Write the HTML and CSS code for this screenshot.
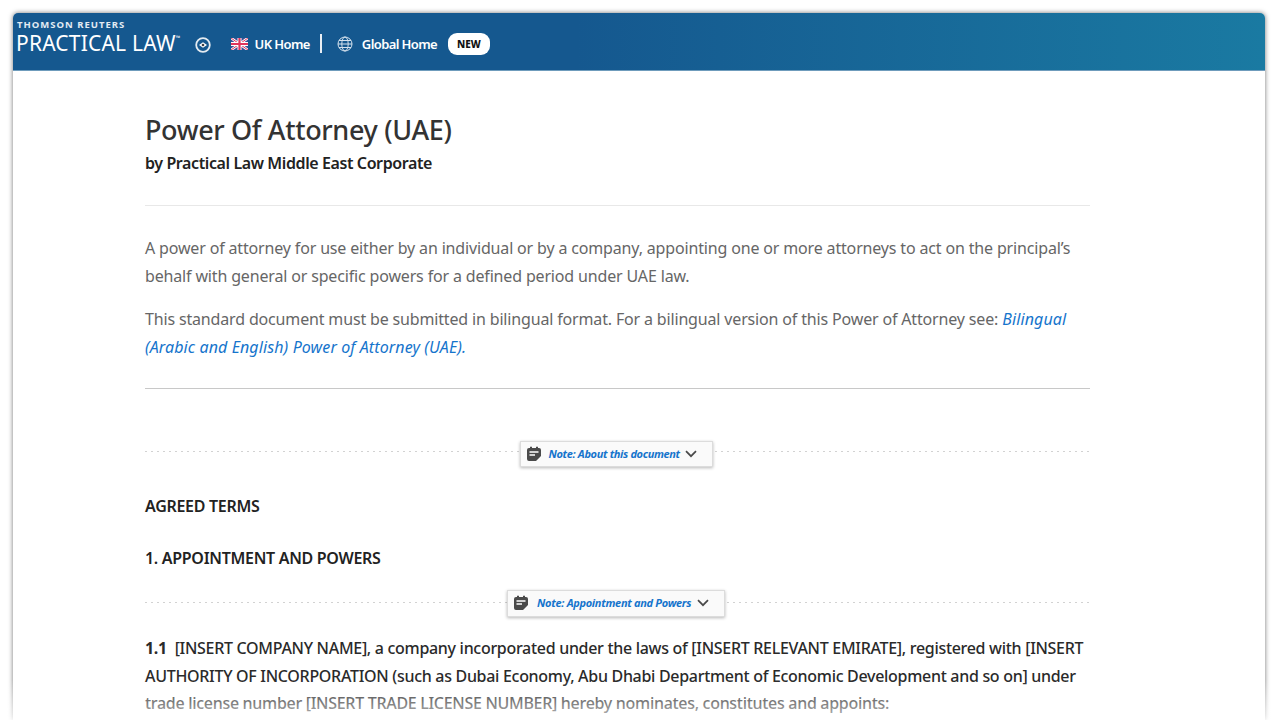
FILE: index.html
```html
<!DOCTYPE html>
<html lang="en">
<head>
  <title>Power Of Attorney (UAE) - Practical Law</title>
  <link rel="stylesheet" href="styles.css">
</head>
<body>

  <div class="page-card">

    <!-- Blue top bar -->
    <div class="top-bar">
      <div class="logo">
        <div class="logo-small">THOMSON REUTERS</div>
        <div class="logo-big">PRACTICAL LAW<span class="tm">™</span></div>
      </div>
      <svg class="logo-icon" width="16" height="16" viewBox="0 0 16 16">
        <circle cx="8" cy="8" r="6.8" fill="none" stroke="#e4ebf1" stroke-width="1.8"/>
        <path d="M4 8 L8 5.2 L12 8 L8 10.8 Z" fill="#fff"/>
        <circle cx="8" cy="8" r="1.3" fill="#3a3f45"/>
      </svg>
      <svg class="flag" width="17" height="12" viewBox="0 0 17 12">
        <rect width="17" height="12" fill="#3d4f96"/>
        <path d="M0 0 L17 12 M17 0 L0 12" stroke="#fff" stroke-width="2.6"/>
        <path d="M0 0 L17 12 M17 0 L0 12" stroke="#e0345c" stroke-width="1"/>
        <path d="M8.5 0 V12 M0 6 H17" stroke="#fff" stroke-width="4"/>
        <path d="M8.5 0 V12 M0 6 H17" stroke="#e0345c" stroke-width="2.2"/>
      </svg>
      <a class="top-link" href="#">UK Home</a>
      <span class="top-divider"></span>
      <svg class="globe" width="16" height="16" viewBox="0 0 16 16" fill="none" stroke="#d5e2ee" stroke-width="1">
        <circle cx="8" cy="8" r="7"/>
        <ellipse cx="8" cy="8" rx="3.2" ry="7"/>
        <path d="M1 8 H15 M2 4.5 H14 M2 11.5 H14"/>
      </svg>
      <a class="top-link" href="#">Global Home</a>
      <span class="new-badge">NEW</span>
    </div>

    <!-- Document -->
    <div class="content">
      <h1>Power Of Attorney (UAE)</h1>
      <div class="byline">by Practical Law Middle East Corporate</div>

      <div class="intro">
        <p>A power of attorney for use either by an individual or by a company, appointing one or more attorneys to act on the principal’s<br>behalf with general or specific powers for a defined period under UAE law.</p>
        <p>This standard document must be submitted in bilingual format. For a bilingual version of this Power of Attorney see: <a href="#">Bilingual<br>(Arabic and English) Power of Attorney (UAE).</a></p>
      </div>

      <div class="note-row note-first">
        <button class="note-btn">
          <svg width="16" height="16" viewBox="0 0 16 16"><path d="M3 2 H4 V0.8 H6 V2 H10 V0.8 H12 V2 H13 Q15 2 15 4 V10 L10 15 H3 Q1 15 1 13 V4 Q1 2 3 2 Z" fill="#4a4a4a"/><path d="M3.5 6 H12.5 M3.5 9 H9" stroke="#fff" stroke-width="1.4"/></svg>
          <span class="note-text">Note: About this document</span>
          <svg class="chev" width="12" height="8" viewBox="0 0 12 8"><path d="M1 1.2 L6 6.2 L11 1.2" fill="none" stroke="#4a4a4a" stroke-width="1.7"/></svg>
        </button>
      </div>

      <h2 class="terms">AGREED TERMS</h2>
      <h2 class="clause">1. APPOINTMENT AND POWERS</h2>

      <div class="note-row note-second">
        <button class="note-btn wide">
          <svg width="16" height="16" viewBox="0 0 16 16"><path d="M3 2 H4 V0.8 H6 V2 H10 V0.8 H12 V2 H13 Q15 2 15 4 V10 L10 15 H3 Q1 15 1 13 V4 Q1 2 3 2 Z" fill="#4a4a4a"/><path d="M3.5 6 H12.5 M3.5 9 H9" stroke="#fff" stroke-width="1.4"/></svg>
          <span class="note-text">Note: Appointment and Powers</span>
          <svg class="chev" width="12" height="8" viewBox="0 0 12 8"><path d="M1 1.2 L6 6.2 L11 1.2" fill="none" stroke="#4a4a4a" stroke-width="1.7"/></svg>
        </button>
      </div>

      <p class="clause-text"><b>1.1</b>&nbsp; [INSERT COMPANY NAME], a company incorporated under the laws of [INSERT RELEVANT EMIRATE], registered with [INSERT<br>AUTHORITY OF INCORPORATION (such as Dubai Economy, Abu Dhabi Department of Economic Development and so on] under<br>trade license number [INSERT TRADE LICENSE NUMBER] hereby nominates, constitutes and appoints:</p>
    </div>

    <!-- Fade at the bottom of the shot -->
    <div class="bottom-fade"></div>
  </div>

</body>
</html>
```

FILE: styles.css
```css
html, body {
  height: 720px;
  overflow: hidden;
}

body {
  margin: 0;
  background: #fff;
  font-family: "Noto Sans", Arial, sans-serif;
  color: #222;
}

.page-card {
  position: relative;
  box-sizing: border-box;
  height: 707px;
  margin: 13px 15px 0 13px;
  background: #fff;
  border-radius: 5px 5px 0 0;
  box-shadow: 0 0 5px rgba(0, 0, 0, 0.55);
}

.top-bar {
  display: flex;
  align-items: center;
  box-sizing: border-box;
  height: 58px;
  padding: 0 0 0 3px;
  border-radius: 5px 5px 0 0;
  background: linear-gradient(90deg, #15588f 0%, #15588f 45%, #1a7aa2 100%);
  border-bottom: 1px solid #6f9cbc;
  color: #fff;
}

.logo {
  align-self: flex-start;
  margin-top: 6px;
}

.logo-small {
  font-size: 9.5px;
  font-weight: 700;
  letter-spacing: 1px;
  line-height: 11px;
  padding-left: 1px;
  color: #e2ebf3;
}

.logo-big {
  margin-top: -3px;
  font-size: 21px;
  line-height: 22px;
  letter-spacing: 0.2px;
  white-space: nowrap;
}

.tm {
  font-size: 6px;
  vertical-align: 11px;
}

.logo-icon {
  margin: 6px 0 0 14px;
}

.flag {
  margin: 5px 0 0 20px;
}

.top-link {
  margin-top: 5px;
  color: #fff;
  font-size: 13px;
  font-weight: 600;
  letter-spacing: -0.6px;
  text-decoration: none;
  white-space: nowrap;
}

.flag + .top-link {
  margin-left: 7px;
}

.top-divider {
  width: 2px;
  height: 19px;
  margin: 3px 15px 0 10px;
  background: #e8eef4;
}

.globe + .top-link {
  margin-left: 9px;
}

.globe {
  margin-top: 4px;
}

.new-badge {
  margin: 5px 0 0 11px;
  padding: 0 9px;
  height: 22px;
  line-height: 22px;
  border-radius: 9px;
  background: #fff;
  color: #111;
  font-size: 10px;
  font-weight: 800;
}

.content {
  width: 945px;
  margin-left: 132px;
}

h1 {
  margin: 0;
  padding-top: 41px;
  font-size: 27px;
  line-height: 36px;
  font-weight: 500;
  letter-spacing: -0.35px;
  color: #333;
}

.byline {
  margin-top: 4px;
  font-size: 16px;
  line-height: 22px;
  font-weight: 600;
  letter-spacing: -0.4px;
  color: #222;
}

.intro {
  margin-top: 31px;
  padding: 28px 0 27px;
  border-top: 1px solid #e8e8e8;
  border-bottom: 1px solid #c8c8c8;
}

.intro p {
  margin: 0 0 15px;
  font-size: 16px;
  line-height: 28px;
  letter-spacing: -0.16px;
  color: #666;
  white-space: nowrap;
}

.intro p:last-child {
  margin-bottom: 0;
}

.intro a {
  color: #1574cc;
  font-style: italic;
  letter-spacing: 0.11px;
  text-decoration: none;
}

.note-row {
  display: flex;
  justify-content: center;
  align-items: center;
  background-image: linear-gradient(90deg, #d2d2d2 40%, transparent 40%);
  background-size: 6px 1px;
  background-repeat: repeat-x;
}

.note-first {
  margin-top: 52px;
  height: 26px;
  padding-right: 3px;
  background-position: 0 10px;
}

.note-second {
  margin-top: 20px;
  height: 28px;
  padding-right: 3px;
  background-position: 0 13px;
}

.note-btn {
  display: flex;
  align-items: center;
  box-sizing: border-box;
  width: 193px;
  height: 26px;
  padding: 0 0 0 5px;
  background: #fafafa;
  border: 1px solid #dcdcdc;
  box-shadow: 0 1px 3px rgba(0, 0, 0, 0.28);
  font-family: inherit;
}

.note-btn.wide {
  width: 218px;
  height: 27px;
}

.note-text {
  margin: -2px 5px 0 7px;
  color: #1574cc;
  font-size: 11px;
  font-weight: 700;
  font-style: italic;
  letter-spacing: -0.35px;
  white-space: nowrap;
}

.wide .note-text {
  letter-spacing: -0.3px;
  margin: -2px 6px 0 8px;
}

.chev {
  flex: none;
}

h2 {
  margin: 0;
  font-size: 16px;
  line-height: 22px;
  font-weight: 600;
  letter-spacing: -0.3px;
  color: #222;
}

.terms {
  margin-top: 28px;
}

.clause {
  margin-top: 30px;
}

.clause-text {
  margin: 18px 0 0;
  font-size: 16px;
  line-height: 27.5px;
  font-weight: 500;
  letter-spacing: -0.3px;
  color: #2a2a2a;
  white-space: nowrap;
}

.clause-text b {
  font-weight: 700;
}

.bottom-fade {
  position: absolute;
  left: -8px;
  right: -8px;
  bottom: 0;
  height: 40px;
  background: linear-gradient(rgba(255, 255, 255, 0), rgba(255, 255, 255, 0.7));
}
```
